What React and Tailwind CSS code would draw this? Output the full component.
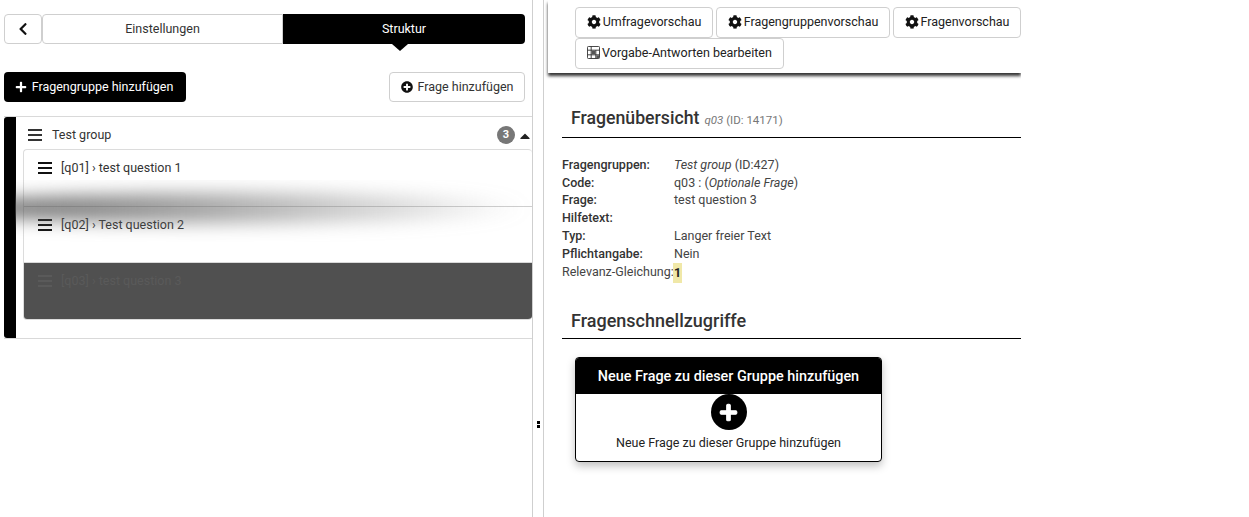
import React from "react";
import { FaChevronLeft, FaCog, FaPlus, FaPlusCircle, FaCaretUp } from "react-icons/fa";

const font = { fontFamily: "Roboto, sans-serif" };

const Bars = ({ className }) => (
  <svg viewBox="0 0 14 12" className={className} fill="currentColor">
    <rect x="0" y="0" width="14" height="2" />
    <rect x="0" y="5" width="14" height="2" />
    <rect x="0" y="10" width="14" height="2" />
  </svg>
);

const TableIcon = () => (
  <svg viewBox="0 0 14 14" className="w-[13px] h-[13px] shrink-0 -translate-y-[1px]" fill="none" stroke="#333" strokeWidth="1">
    <rect x="0.5" y="0.5" width="13" height="13" rx="1" />
    <path d="M0.5 4.5h13M0.5 9.5h13M4.5 0.5v13M9.5 4.5v9" />
    <rect x="5" y="5" width="4" height="4" fill="#555" stroke="none" />
    <rect x="10" y="10" width="3" height="3" fill="#555" stroke="none" />
  </svg>
);

const ToolButton = ({ icon, label, className }) => (
  <button className={`h-[31px] flex items-center justify-center gap-[2px] border border-[#cfcfcf] rounded-[4px] bg-white text-[12.5px] text-[#222] ${className}`}>
    {icon}
    {label}
  </button>
);

const QuestionRow = ({ label, className, iconClass }) => (
  <div className={`pl-[14px] pt-[9px] flex items-start gap-[9px] text-[12.5px] ${className}`}>
    <Bars className={`w-[14px] h-[12px] mt-[3px] ${iconClass}`} />
    <span>{label}</span>
  </div>
);

const Row = ({ label, children, className = "h-[18px]" }) => (
  <div className={`flex items-center ${className}`}>
    <span className="w-[112px] font-medium text-[#333] shrink-0">{label}</span>
    <span className="text-[#444]">{children}</span>
  </div>
);

const LeftPanel = () => (
  <div className="w-[533px] h-[517px] shrink-0 border-r border-[#cfcfcf] relative">
    <div className="flex pl-[4px] pr-[7px] pt-[14px]">
      <button className="w-[38px] h-[30px] flex items-center justify-center border border-[#cfcfcf] rounded-[4px] text-[#111]">
        <FaChevronLeft size={14} />
      </button>
      <button className="w-[241px] h-[30px] border border-[#cfcfcf] rounded-l-[4px] text-[12.5px] text-[#333]">Einstellungen</button>
      <div className="relative w-[242px]">
        <button className="w-full h-[30px] bg-black text-white text-[12.5px] rounded-r-[4px]">Struktur</button>
        <div className="absolute left-[109px] top-[30px] w-0 h-0 border-x-[8px] border-x-transparent border-t-[7px] border-t-black" />
      </div>
    </div>
    <div className="flex justify-between pl-[4px] pr-[7px] mt-[28px]">
      <button className="w-[182px] h-[30px] pr-[2px] flex items-center justify-center gap-[5px] bg-black text-white text-[12.5px] rounded-[4px]">
        <FaPlus size={12} />
        Fragengruppe hinzufügen
      </button>
      <button className="w-[136px] h-[30px] flex items-center justify-center gap-[5px] border border-[#cfcfcf] rounded-[4px] text-[12.5px] text-[#333]">
        <FaPlusCircle size={12} className="text-[#111]" />
        Frage hinzufügen
      </button>
    </div>
    <div className="ml-[4px] mt-[14px] h-[223px] border-y border-[#d9d9d9] flex">
      <div className="w-[12px] bg-black rounded-l-[3px] shrink-0" />
      <div className="flex-1 pl-[7px] min-w-0">
        <div className="h-[32px] flex items-center text-[12.5px] text-[#333] pl-[5px] pt-[4px]">
          <Bars className="w-[14px] h-[12px] mr-[10px] text-[#333]" />
          Test group
          <span className="ml-auto w-[18px] h-[18px] translate-x-[1px] rounded-full bg-[#777] text-white text-[11px] font-bold flex items-center justify-center">3</span>
          <FaCaretUp size={16} className="ml-[2px] translate-x-[1px] translate-y-[1px] text-[#222]" />
        </div>
        <div className="border border-[#dcdcdc] border-r-0 rounded-[4px] overflow-hidden h-[171px]">
          <QuestionRow label="[q01] › test question 1" className="h-[57px] text-[#333] border-b border-[#cfcfcf]" iconClass="text-[#111]" />
          <QuestionRow label="[q02] › Test question 2" className="h-[56px] text-[#333] border-b border-[#d9d9d9]" iconClass="text-[#111]" />
          <QuestionRow label="[q03] › test question 3" className="h-[57px] bg-[#505050] text-[#5a5a5a]" iconClass="text-[#5a5a5a]" />
        </div>
      </div>
    </div>
    {/* drag shadow over the first two rows */}
    <div className="absolute left-[15px] top-[180px] w-[517px] h-[62px] overflow-hidden pointer-events-none">
      <div className="absolute left-[-70px] top-[13px] w-[585px] h-[30px] rounded-[50%] bg-[linear-gradient(90deg,rgba(80,80,80,0.9),rgba(110,110,110,0.55)_50%,rgba(200,200,200,0))] blur-[9px]" />
    </div>
  </div>
);

const GearIcon = () => <FaCog size={14} className="text-[#111] -translate-y-[1px]" />;

const RightPanel = () => (
  <div className="w-[478px] shrink-0 border-l border-[#cfcfcf]">
    <div className="ml-[4px] h-[73px] pl-[27px] pt-[7px] flex flex-wrap content-start gap-x-[3px] bg-white shadow-[0_3px_3px_rgba(0,0,0,0.8)] [clip-path:inset(0_0_-10px_-10px)]">
      <ToolButton icon={<GearIcon />} label="Umfragevorschau" className="w-[138px]" />
      <ToolButton icon={<GearIcon />} label="Fragengruppenvorschau" className="w-[174px]" />
      <ToolButton icon={<GearIcon />} label="Fragenvorschau" className="w-[128px]" />
      <ToolButton icon={<TableIcon />} label="Vorgabe-Antworten bearbeiten" className="w-[209px]" />
    </div>
    <div className="ml-[18px] mt-[29px] h-[36px] border-b border-black pl-[9px] flex items-baseline gap-[5px]">
      <span className="text-[17.7px] font-medium text-[#333] leading-[32px]">Fragenübersicht</span>
      <span className="text-[11.5px] text-[#777]"><i>q03</i> (ID: 14171)</span>
    </div>
    <div className="ml-[18px] mt-[18px] text-[12.5px]">
      <Row label="Fragengruppen:"><i>Test group</i> (ID:427)</Row>
      <Row label="Code:">q03 : (<i>Optionale Frage</i>)</Row>
      <Row label="Frage:" className="h-[17px]">test question 3</Row>
      <Row label="Hilfetext:" />
      <Row label="Typ:">Langer freier Text</Row>
      <Row label="Pflichtangabe:">Nein</Row>
      <div className="flex h-[19px] items-center text-[#444]">
        <span className="w-[111px] whitespace-nowrap">Relevanz-Gleichung:</span>
        <span className="bg-[#f0e8a8] font-bold text-[#222] px-[1px] h-[20px] leading-[20px]">1</span>
      </div>
    </div>
    <div className="ml-[18px] mt-[17px] h-[40px] border-b border-black pl-[9px] pt-[2px] text-[18px] font-medium text-[#333] leading-[39px]">
      Fragenschnellzugriffe
    </div>
    <div className="ml-[31px] mt-[18px] w-[307px] h-[105px] rounded-[4px] border border-black bg-white shadow-[0_4px_8px_rgba(0,0,0,0.25)] overflow-hidden">
      <div className="h-[36px] pt-[1px] bg-black text-white text-[14.4px] font-medium flex items-center justify-center">Neue Frage zu dieser Gruppe hinzufügen</div>
      <div className="flex flex-col items-center text-[12.5px] text-[#222]">
        <div className="w-[36px] h-[36px] rounded-full bg-black text-white flex items-center justify-center">
          <FaPlus size={19} stroke="currentColor" strokeWidth={30} />
        </div>
        <span className="mt-[4px]">Neue Frage zu dieser Gruppe hinzufügen</span>
      </div>
    </div>
  </div>
);

export default function App() {
  return (
    <div className="w-[1249px] h-[517px] bg-white flex overflow-hidden" style={font}>
      <LeftPanel />
      <div className="w-[10px] shrink-0 flex flex-col items-center pt-[421px] pl-[1px] gap-[1px]">
        <span className="w-[3px] h-[3px] bg-black" />
        <span className="w-[3px] h-[3px] bg-black" />
      </div>
      <RightPanel />
    </div>
  );
}
